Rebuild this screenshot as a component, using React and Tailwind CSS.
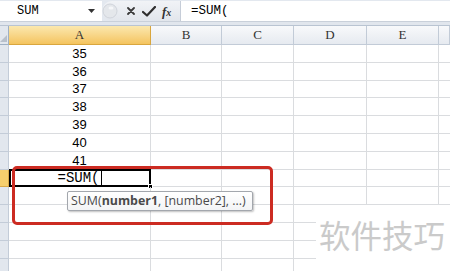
export default function App() {
  const rows = ['35', '36', '37', '38', '39', '40', '41', '=SUM(', '', '', '', '', '', ''];
  const headers = ['A', 'B', 'C', 'D', 'E', ''];
  return (
    <div className="relative w-[450px] h-[271px] overflow-hidden bg-white">
      {/* formula bar */}
      <div className="flex h-[22px] bg-[#e3e8ef] pt-px border-b border-[#c9d0da]">
        <div className="w-[102px] h-[20px] bg-white flex items-center justify-between pl-[17px] pr-[7px]">
          <span className="text-[12px] leading-none text-black" style={{ fontFamily: '"Liberation Mono", monospace' }}>SUM</span>
          <svg width="7" height="4" viewBox="0 0 7 4"><path d="M0 0 L7 0 L3.5 4 Z" fill="#333" /></svg>
        </div>
        <div className="w-[78px] h-[20px] flex items-center bg-gradient-to-b from-[#f1f3f6] to-[#e2e6ec] rounded-l-[10px]">
          <svg width="16" height="18" viewBox="0 0 16 18">
            <circle cx="8" cy="9" r="7" fill="#e4e7eb" stroke="#d0d4db" strokeWidth="1" />
            <ellipse cx="9" cy="6" rx="2.5" ry="1.5" fill="#f6f7f9" />
          </svg>
          <svg width="8" height="8" viewBox="0 0 8 8" className="ml-[9px]">
            <path d="M1 1 L7 7 M7 1 L1 7" stroke="#3a3a3a" strokeWidth="1.8" strokeLinecap="round" />
          </svg>
          <svg width="14" height="11" viewBox="0 0 14 11" className="ml-[7px]">
            <path d="M1 6 L5 9.5 L13 1" stroke="#2f2f2f" strokeWidth="2.2" fill="none" strokeLinecap="round" strokeLinejoin="round" />
          </svg>
          <span className="ml-[6px] text-[13px] leading-none italic font-bold text-[#333]" style={{ fontFamily: '"Liberation Serif", serif' }}>f<span className="text-[10px]">x</span></span>
        </div>
        <div className="flex-1 h-[20px] bg-white border-l border-[#c6cdd8] pl-[10px] flex items-center">
          <span className="text-[12.5px] leading-none text-black" style={{ fontFamily: '"Liberation Mono", monospace' }}>=SUM(</span>
        </div>
      </div>
      <div className="h-[3px] bg-[#e1e6ed]" />

      {/* grid */}
      <div className="grid grid-cols-[9px_142px_71px_72px_73px_72px_1fr] border-t border-[#b9c4d2]">
        {/* header row */}
        <div className="h-[19px] bg-[#e2e7ee] border-r border-b border-[#9fb0c4] flex items-end justify-end">
          <svg width="7" height="7" viewBox="0 0 7 7" className="mb-[2px] mr-[1px]"><path d="M7 0 L7 7 L0 7 Z" fill="#b8c0cb" /></svg>
        </div>
        {headers.map((h, i) => (
          <div
            key={'h' + i}
            className={
              i === 0
                ? 'h-[19px] bg-gradient-to-b from-[#fbe8ae] to-[#f4c45e] border-r border-b border-[#d9a63e] flex items-center justify-center text-[13px] text-[#333]'
                : 'h-[19px] bg-gradient-to-b from-[#f8f9fb] to-[#e6eaf0] border-r border-b border-[#c2cbd7] flex items-center justify-center text-[13px] text-[#333]'
            }
            style={{ fontFamily: '"Liberation Serif", serif' }}
          >
            {h}
          </div>
        ))}
        {rows.map((v, r) => {
          const active = r === 7;
          return [
            <div
              key={'rh' + r}
              className={
                active
                  ? 'h-[17.8px] bg-[#f6cf6d] border-r border-b border-[#d8a949]'
                  : 'h-[17.8px] bg-[#e2e7ee] border-r border-b border-[#c3ccd8]'
              }
            />,
            <div key={'a' + r} className="relative h-[17.8px] border-r border-b border-[#dadcdf] flex items-center justify-center">
              {active ? (
                <>
                  <span className="text-[14px] leading-none text-black" style={{ fontFamily: '"Liberation Mono", monospace' }}>=SUM(</span>
                  <span className="w-px h-[14px] bg-black ml-px" />
                  <div className="absolute left-0 top-[-1px] right-[-1px] bottom-[-1px] border-2 border-black" />
                  <div className="absolute right-[-3px] bottom-[-3px] w-[5px] h-[5px] bg-black border border-white" />
                </>
              ) : (
                <span className="text-[13px] leading-none text-black" style={{ fontFamily: '"Liberation Sans", Arial, sans-serif' }}>{v}</span>
              )}
            </div>,
            <div key={'b' + r} className="h-[17.8px] border-r border-b border-[#dadcdf]" />,
            <div key={'c' + r} className="h-[17.8px] border-r border-b border-[#dadcdf]" />,
            <div key={'d' + r} className="h-[17.8px] border-r border-b border-[#dadcdf]" />,
            <div key={'e' + r} className="h-[17.8px] border-r border-b border-[#dadcdf]" />,
            <div key={'f' + r} className="h-[17.8px] border-b border-[#dadcdf]" />,
          ];
        })}
      </div>

      {/* red highlight */}
      <div className="absolute left-[12px] top-[166px] w-[261px] h-[59px] border-[3px] border-[#cc2b22] rounded-[5px]" />

      {/* tooltip */}
      <div
        className="absolute left-[67px] top-[191px] w-[186px] h-[20px] bg-gradient-to-b from-white to-[#f3f4f6] border border-[#a3a7ad] rounded-[2px] shadow-[1px_1px_2px_rgba(0,0,0,0.25)] flex items-center pl-[3px] text-[12.4px] leading-none text-[#4a4a4a] whitespace-nowrap"
        style={{ fontFamily: '"Open Sans", "Noto Sans", sans-serif' }}
      >
        SUM(<span className="font-bold">number1</span>, [number2], ...)
      </div>

      {/* watermark */}
      <div className="absolute left-[316px] top-[205px] right-0 bottom-0 bg-white flex items-start pt-[14px] pl-[3px]">
        <span className="text-[31.5px] leading-none text-[#cacaca]" style={{ fontFamily: '"Noto Sans CJK SC", sans-serif' }}>软件技巧</span>
      </div>
    </div>
  );
}
